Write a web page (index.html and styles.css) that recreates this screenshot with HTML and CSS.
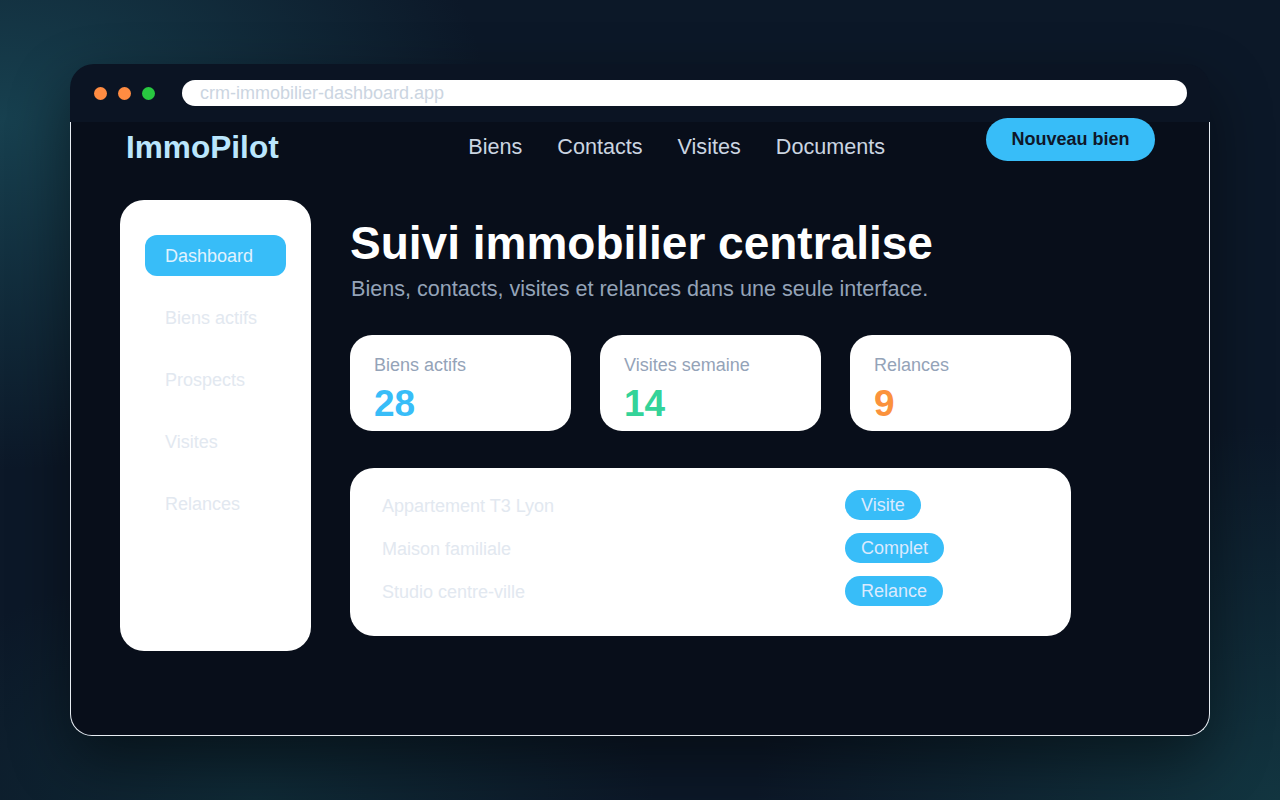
FILE: index.html
```html
<!DOCTYPE html>
<html lang="fr">
<head>
<meta charset="utf-8">
<title>ImmoPilot</title>
<link rel="stylesheet" href="styles.css">
</head>
<body>
<div class="stage">
  <div class="window">
    <div class="titlebar">
      <div class="dots">
        <span class="dot dot-orange"></span>
        <span class="dot dot-orange"></span>
        <span class="dot dot-green"></span>
      </div>
      <div class="urlbar">crm-immobilier-dashboard.app</div>
    </div>
    <div class="window-body">
      <header class="header">
        <div class="logo">ImmoPilot</div>
        <nav class="nav">
          <a class="nav-link">Biens</a>
          <a class="nav-link">Contacts</a>
          <a class="nav-link">Visites</a>
          <a class="nav-link">Documents</a>
        </nav>
        <button class="cta">Nouveau bien</button>
      </header>
      <div class="content">
        <aside class="sidebar">
          <div class="side-item active">Dashboard</div>
          <div class="side-item">Biens actifs</div>
          <div class="side-item">Prospects</div>
          <div class="side-item">Visites</div>
          <div class="side-item">Relances</div>
        </aside>
        <main class="main">
          <h1 class="title">Suivi immobilier centralise</h1>
          <p class="subtitle">Biens, contacts, visites et relances dans une seule interface.</p>
          <div class="stats">
            <div class="stat">
              <div class="stat-label">Biens actifs</div>
              <div class="stat-value blue">28</div>
            </div>
            <div class="stat">
              <div class="stat-label">Visites semaine</div>
              <div class="stat-value green">14</div>
            </div>
            <div class="stat">
              <div class="stat-label">Relances</div>
              <div class="stat-value orange">9</div>
            </div>
          </div>
          <div class="list">
            <div class="row"><span class="row-name">Appartement T3 Lyon</span><span class="badge">Visite</span></div>
            <div class="row"><span class="row-name">Maison familiale</span><span class="badge">Complet</span></div>
            <div class="row"><span class="row-name">Studio centre-ville</span><span class="badge">Relance</span></div>
          </div>
        </main>
      </div>
    </div>
  </div>
</div>
</body>
</html>
```
FILE: styles.css
```css
* { box-sizing: border-box; }
html, body { margin: 0; padding: 0; }
body {
  width: 1280px;
  height: 800px;
  overflow: hidden;
  font-family: "Liberation Sans", Arial, sans-serif;
  background:
    radial-gradient(ellipse 700px 500px at 0% 15%, #17404f 0%, rgba(23,64,79,0) 70%),
    radial-gradient(ellipse 700px 500px at 100% 100%, #123540 0%, rgba(18,53,64,0) 75%),
    radial-gradient(ellipse 500px 300px at 20% 100%, #0f2a36 0%, rgba(15,42,54,0) 80%),
    #0c1828;
}
.stage {
  padding: 64px 70px 0 70px;
}
.window {
  width: 1140px;
  height: 672px;
  display: flex;
  flex-direction: column;
  border-radius: 24px 24px 22px 22px;
  box-shadow: 0 24px 60px rgba(0,0,0,0.45);
}
.titlebar {
  height: 58px;
  flex: none;
  display: flex;
  align-items: center;
  gap: 27px;
  padding: 0 23px 0 24px;
  background: #0b1423;
  border-radius: 24px 24px 0 0;
}
.dots { display: flex; gap: 11px; }
.dot { width: 13px; height: 13px; border-radius: 50%; display: block; }
.dot-orange { background: #ff8c42; }
.dot-green { background: #28c840; }
.urlbar {
  flex: 1;
  height: 26px;
  border-radius: 13px;
  background: #ffffff;
  color: #cbd5e1;
  font-size: 18px;
  line-height: 26px;
  padding-left: 18px;
}
.window-body {
  flex: 1;
  background: #080e1a;
  border: 1px solid #e8edf3;
  border-top: none;
  border-radius: 0 0 22px 22px;
  padding: 0 54px 0 49px;
}
.header {
  height: 58px;
  margin-top: -4px;
  display: flex;
  align-items: center;
  padding-left: 6px;
}
.logo {
  font-size: 31.6px;
  font-weight: 700;
  color: #bae6fd;
}
.nav {
  margin-left: auto;
  margin-right: 101px;
  display: flex;
  gap: 35px;
}
.nav-link {
  font-size: 21.6px;
  color: #cbd5e1;
}
.cta {
  align-self: flex-start;
  height: 43px;
  width: 169px;
  border: none;
  border-radius: 22px;
  background: #38bdf8;
  color: #0f172a;
  font-family: inherit;
  font-size: 18px;
  font-weight: 700;
  padding: 0;
}
.content {
  display: flex;
  gap: 39px;
  margin-top: 24px;
  align-items: flex-start;
}
.sidebar {
  width: 191px;
  height: 451px;
  flex: none;
  background: #ffffff;
  border-radius: 24px;
  padding: 35px 25px;
  display: flex;
  flex-direction: column;
  gap: 21px;
}
.side-item {
  height: 41px;
  line-height: 42px;
  padding-left: 20px;
  font-size: 18px;
  color: #e2e8f0;
  border-radius: 12px;
}
.side-item.active {
  background: #38bdf8;
  color: #e0f2fe;
}
.main {
  width: 721px;
  flex: none;
}
.title {
  margin: 15px 0 0 0;
  font-size: 46px;
  line-height: 56px;
  font-weight: 700;
  color: #ffffff;
}
.subtitle {
  margin: 5px 0 0 1px;
  font-size: 21.6px;
  line-height: 26px;
  color: #94a3b8;
}
.stats {
  margin-top: 33px;
  display: grid;
  grid-template-columns: repeat(3, 221px);
  gap: 29px;
}
.stat {
  height: 96px;
  background: #ffffff;
  border-radius: 22px;
  padding: 19px 24px 0 24px;
}
.stat-label {
  font-size: 18px;
  line-height: 22px;
  color: #94a3b8;
}
.stat-value {
  margin-top: 9px;
  font-size: 37px;
  line-height: 38px;
  font-weight: 700;
}
.blue { color: #38bdf8; }
.green { color: #34d399; }
.orange { color: #fb923c; }
.list {
  margin-top: 37px;
  height: 168px;
  background: #ffffff;
  border-radius: 24px;
  padding: 22px 32px 0 32px;
  display: flex;
  flex-direction: column;
  gap: 13px;
}
.row {
  display: grid;
  grid-template-columns: 463px auto;
  align-items: center;
  height: 30px;
}
.row-name {
  font-size: 18px;
  color: #e2e8f0;
  padding-top: 2px;
}
.badge {
  justify-self: start;
  height: 30px;
  line-height: 31px;
  padding: 0 16px;
  border-radius: 15px;
  background: #38bdf8;
  color: #dbeafe;
  font-size: 18px;
}
```
